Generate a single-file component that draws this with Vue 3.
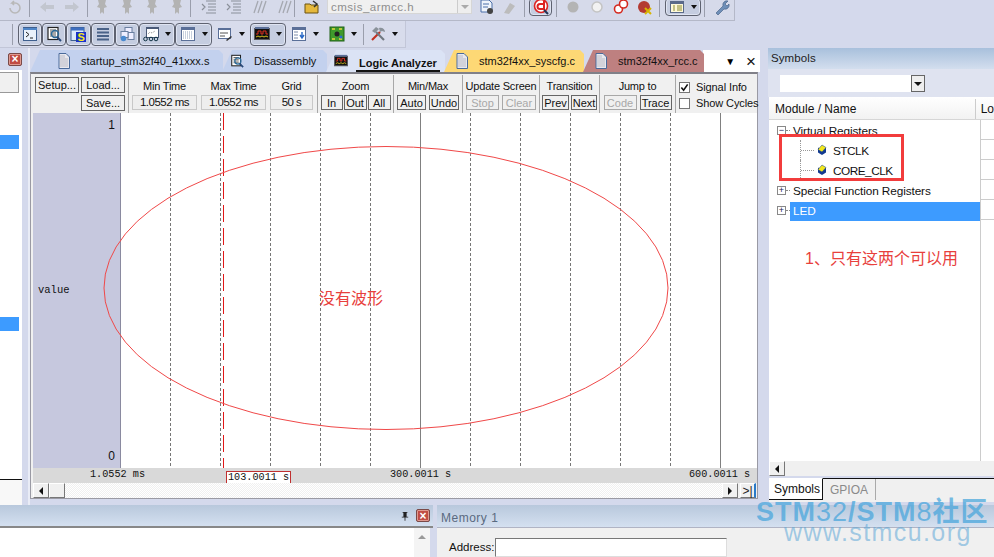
<template>
  <div class="ide">
    <!-- top toolbars -->
    <div class="toolbar row1">
      <svg class="ico" viewBox="0 0 16 16"><path d="M3 9a5 5 0 1 0 5-5H5l2-2M5 4l2 2" fill="none" stroke="#b8b8b8" stroke-width="1.6"/></svg>
      <span class="sep s6"></span>
      <div class="grp m9">
        <svg class="ico" viewBox="0 0 16 16"><path d="M1 8l6-5v3h8v4H7v3z" fill="#c2c6cf"/></svg>
        <svg class="ico" viewBox="0 0 16 16"><path d="M15 8l-6-5v3H1v4h8v3z" fill="#c2c6cf"/></svg>
      </div>
      <span class="sep s7"></span>
      <div class="grp m6">
        <svg v-for="n in 4" :key="n" class="ico" viewBox="0 0 16 16"><path d="M4 1h8l-1 4 2 3-3 1v6l-2-2-2 2V9L3 8l2-3z" fill="#b3b3b3"/></svg>
      </div>
      <span class="sep s5"></span>
      <div class="grp m10">
        <svg v-for="n in 2" :key="'i' + n" class="ico" viewBox="0 0 16 16"><path d="M5 2h10M7 5h8M7 8h8M7 11h8M5 14h10M1 5l3 3-3 3" fill="none" stroke="#8a8f99" stroke-width="1.2"/></svg>
        <svg v-for="n in 2" :key="'c' + n" class="ico" viewBox="0 0 16 16"><path d="M3 14L7 2M7 14l4-12M11 14l4-12" fill="none" stroke="#a5a8b0" stroke-width="1.3"/></svg>
      </div>
      <span class="sep s2"></span>
      <div class="grp m9">
        <svg class="ico" viewBox="0 0 16 16"><path d="M1 5h5l1 1h7v8H1z" fill="#e5b83c" stroke="#6a5210"/><path d="M9 2l4 3-3 3" fill="none" stroke="#333" stroke-width="1.5"/></svg>
      </div>
      <div class="file-combo"><span class="file-name">cmsis_armcc.h</span><span class="file-arrow"></span></div>
      <div class="grp tools-a">
        <svg class="ico" viewBox="0 0 16 16"><path d="M2 1h8l3 3v9H2z" fill="#eef3fb" stroke="#4a6fa8"/><path d="M4 5h6M4 8h5" stroke="#4a6fa8"/><circle cx="11" cy="12" r="3" fill="#444"/></svg>
        <svg class="ico" viewBox="0 0 16 16"><path d="M3 14L9 4l5 3-6 8z" fill="#bcbcbc"/></svg>
      </div>
      <span class="sep s7"></span>
      <span class="pressed dbg">
        <svg class="ico" viewBox="0 0 16 16"><circle cx="8" cy="7" r="6.500" fill="#fff" stroke="#d22" stroke-width="1.600"/><path d="M11 2v8H7a2.500 2.500 0 1 1 0-5h4" fill="none" stroke="#d22" stroke-width="2"/><path d="M11 11l4 4" stroke="#235" stroke-width="2"/></svg>
      </span>
      <span class="sep s4"></span>
      <div class="grp circles">
        <svg class="ico" viewBox="0 0 16 16"><circle cx="8" cy="8" r="5.500" fill="#b4b4b4"/></svg>
        <svg class="ico" viewBox="0 0 16 16"><circle cx="8" cy="8" r="5" fill="#f2f2f2" stroke="#c4c4c4" stroke-width="1.500"/></svg>
        <svg class="ico" viewBox="0 0 16 16"><circle cx="5.500" cy="10" r="4" fill="#fff" stroke="#d42a20" stroke-width="1.600"/><circle cx="10.500" cy="5" r="4" fill="#fff" stroke="#d42a20" stroke-width="1.600"/></svg>
        <svg class="ico" viewBox="0 0 16 16"><circle cx="7" cy="8" r="6" fill="#b43a32"/><path d="M8 9l6 6M14 9l-6 6" stroke="#d8b400" stroke-width="2"/></svg>
      </div>
      <span class="sep s6"></span>
      <span class="pressed drop view-drop">
        <svg class="ico" viewBox="0 0 16 16"><rect x="1.500" y="2.500" width="13" height="11" fill="#fdf8d8" stroke="#5a6a8a"/><path d="M1 4h14" stroke="#5a6a8a" stroke-width="2"/><path d="M4 7h2M4 9h2M4 11h2M8 7h5M8 9h5M8 11h5" stroke="#8a8a30"/></svg>
        <i class="caret"></i>
      </span>
      <span class="sep s3"></span>
      <div class="grp m9">
        <svg class="ico" viewBox="0 0 16 16"><path d="M2 14l7-7a4 4 0 0 1 5-5l-3 3 2 2 2-2a4 4 0 0 1-5 5l-6 6z" fill="#6f8fb8" stroke="#3f5a80" stroke-width=".6"/></svg>
      </div>
    </div>

    <div class="toolbar row2">
      <span class="sep lead"></span>
      <span class="pressed">
        <svg class="ico" viewBox="0 0 16 16"><rect x="1.500" y="1.500" width="13" height="13" fill="#eaf2fc" stroke="#3e5f8e"/><path d="M1 3h14" stroke="#4f86c8" stroke-width="2"/><path d="M4 6l3 2.500L4 11M8 12h3" fill="none" stroke="#222"/></svg>
      </span>
      <span class="pressed">
        <svg class="ico" viewBox="0 0 16 16"><rect x="2" y="1.500" width="10" height="12" fill="#fff" stroke="#222" stroke-width="1.200"/><path d="M4 4h6M4 6h6M4 8h6M4 10h6" stroke="#555"/><circle cx="9" cy="8" r="3.500" fill="none" stroke="#2a6a9a" stroke-width="1.400"/><path d="M11 11l4 4" stroke="#2a4a7a" stroke-width="2"/></svg>
      </span>
      <span class="pressed">
        <svg class="ico" viewBox="0 0 16 16"><rect x="1" y="1.500" width="13" height="13" fill="#dceafa" stroke="#3e5f8e"/><rect x="1" y="1.500" width="13" height="3" fill="#3e6fc0"/><rect x="6" y="6" width="10" height="10" fill="#1a32c8"/><text x="7.500" y="15" class="s-glyph">S</text></svg>
      </span>
      <span class="pressed">
        <svg class="ico" viewBox="0 0 16 16"><path d="M2 3h12M2 6.500h12M2 10h12M2 13.500h12" stroke="#4a6288" stroke-width="2.200"/></svg>
      </span>
      <span class="pressed">
        <svg class="ico" viewBox="0 0 16 16"><rect x="6" y="1.500" width="7" height="6" fill="#eef" stroke="#6a7fa0"/><rect x="9" y="6.500" width="6" height="7" fill="#eef" stroke="#6a7fa0"/><rect x="2" y="5.500" width="7" height="6" fill="#eef" stroke="#6a7fa0"/><circle cx="4.500" cy="12.500" r="2.800" fill="#4a8ad0"/></svg>
      </span>
      <span class="pressed drop">
        <svg class="ico" viewBox="0 0 16 16"><rect x="3.500" y="1.500" width="12" height="10" fill="#fff" stroke="#4a5a78"/><path d="M3 1h13v2H3z" fill="#4a5a78"/><path d="M5 8l2-2 2 1 3-2" fill="none" stroke="#888" stroke-dasharray="1 1"/><circle cx="2.500" cy="13" r="1.800" fill="none" stroke="#134"/><circle cx="8" cy="13" r="1.800" fill="none" stroke="#134"/><circle cx="13" cy="13" r="1.800" fill="none" stroke="#134"/></svg>
        <i class="caret"></i>
      </span>
      <span class="pressed drop">
        <svg class="ico" viewBox="0 0 16 16"><rect x="1.500" y="1.500" width="13" height="13" fill="#fff" stroke="#5a6f98"/><path d="M1 3h14" stroke="#5a6f98" stroke-width="2"/><path d="M3 6h10M3 8h10M3 10h10M3 12h10" stroke="#8fa0bc" stroke-dasharray="1 1"/></svg>
        <i class="caret"></i>
      </span>
      <span class="plain drop">
        <svg class="ico" viewBox="0 0 16 16"><rect x="1.500" y="2.500" width="12" height="10" fill="#fff" stroke="#5a6f98"/><path d="M1 3h13" stroke="#5a6f98" stroke-width="2"/><path d="M3 7h8M3 10h5" stroke="#555"/><path d="M9 14l5-4 1 1-5 4z" fill="#333"/></svg>
        <i class="caret"></i>
      </span>
      <span class="pressed drop">
        <svg class="ico" viewBox="0 0 16 16"><rect x=".5" y="2.500" width="15" height="11" fill="#111" stroke="#5a5a60"/><rect x="1" y="1" width="14" height="2" fill="#5a6f98"/><path d="M2 8h2V5h3v3h2V5h3v3h2" fill="none" stroke="#e03020"/><path d="M2 11l2-1 2 1 2-1 2 1 2-1 2 1" fill="none" stroke="#d8c020"/></svg>
        <i class="caret"></i>
      </span>
      <span class="plain drop">
        <svg class="ico" viewBox="0 0 16 16"><rect x="1.500" y="1.500" width="13" height="13" fill="#fff" stroke="#5a6f98"/><path d="M1 3h14" stroke="#5a6f98" stroke-width="2"/><path d="M3 6h4M3 9h4M3 12h4" stroke="#7a8aa8"/><path d="M11 6v5M9 9l2 3 2-3" fill="none" stroke="#2a6ac8" stroke-width="1.400"/></svg>
        <i class="caret"></i>
      </span>
      <span class="plain drop">
        <svg class="ico" viewBox="0 0 16 16"><rect x="1" y="1" width="14" height="14" fill="#3f9a2c" stroke="#206015"/><circle cx="8" cy="8" r="2.500" fill="#222"/><path d="M3 3h3M10 3h3M3 13h3M10 13h3" stroke="#e8d840" stroke-width="1.400"/><circle cx="12" cy="11" r="1.500" fill="#2a6ad0"/></svg>
        <i class="caret"></i>
      </span>
      <span class="sep tall"></span>
      <span class="plain drop">
        <svg class="ico" viewBox="0 0 16 16"><path d="M2 14l8-8" stroke="#c03020" stroke-width="2.200"/><path d="M14 14L6 6" stroke="#707880" stroke-width="2.200"/><path d="M2 5l4-4 3 2-4 4zM9 2c3-1 6 1 6 4l-3-1-2 1z" fill="#8a929a"/></svg>
        <i class="caret"></i>
      </span>
    </div>

    <!-- main area -->
    <div class="workspace">
      <aside class="left">
        <div class="left-title"><span class="close-btn">×</span></div>
        <div class="left-body">
          <div class="left-box"></div>
          <div class="left-sel first-sel"></div>
          <div class="left-sel second-sel"></div>
        </div>
      </aside>

      <section class="center">
        <div class="tabs">
          <div v-for="t in tabs" :key="t.name" class="tab" :class="t.cls" :style="{ width: t.width + 'px' }">
            <svg v-if="t.icon === 'doc'" class="tab-doc" viewBox="0 0 14 16"><path d="M2 .5h7l3.500 3.500v11.500H2z" fill="#e8e8ee" stroke="#4a6a9a"/><path d="M3 2h5v3h3v9H3z" fill="#d2d2da"/></svg>
            <svg v-else-if="t.icon === 'dis'" class="tab-doc" viewBox="0 0 16 16"><rect x="2" y="1.500" width="10" height="12" fill="#fff" stroke="#222" stroke-width="1.200"/><path d="M4 4h6M4 6h6M4 8h6M4 10h6" stroke="#555"/><circle cx="9" cy="8" r="3.500" fill="none" stroke="#2a6a9a" stroke-width="1.400"/><path d="M11 11l4 4" stroke="#2a4a7a" stroke-width="2"/></svg>
            <svg v-else class="tab-doc" viewBox="0 0 16 16"><rect x=".5" y="2.500" width="15" height="11" fill="#111" stroke="#5a5a60"/><rect x="1" y="1" width="14" height="2" fill="#5a6f98"/><path d="M2 8h2V5h3v3h2V5h3v3h2" fill="none" stroke="#e03020"/><path d="M2 11l2-1 2 1 2-1 2 1 2-1 2 1" fill="none" stroke="#d8c020"/></svg>
            <span class="tab-label">{{ t.name }}</span>
          </div>
          <div class="tab-tail"><span class="tab-menu">▼</span><span class="tab-x">×</span></div>
        </div>

        <div class="analyzer">
          <div class="la-head">
            <div class="group setup-group">
              <div class="btn-col">
                <button class="btn setup">Setup...</button>
              </div>
              <div class="btn-col">
                <button class="btn load">Load...</button>
                <button class="btn load">Save...</button>
              </div>
            </div>
            <div class="group times">
              <div v-for="f in timeFields" :key="f.label" class="field" :style="{ width: f.width + 'px' }">
                <span class="g-title">{{ f.label }}</span>
                <span class="value-box">{{ f.value }}</span>
              </div>
            </div>
            <div v-for="g in groups" :key="g.title" class="group btn-group" :style="{ width: g.width + 'px' }">
              <span class="g-title">{{ g.title }}</span>
              <div class="g-btns" :style="{ gap: g.gap + 'px' }">
                <button v-for="b in g.buttons" :key="b.label" class="btn" :class="{ off: g.off || b.off }" :style="{ width: b.width + 'px' }">{{ b.label }}</button>
              </div>
            </div>
            <div class="group checks">
              <label class="check"><span class="box on">
                <svg viewBox="0 0 10 10"><path d="M1.500 5l2.500 3 4.500-6.500" fill="none" stroke="#111" stroke-width="1.800"/></svg>
              </span>Signal Info</label>
              <label class="check"><span class="box"></span>Show Cycles</label>
            </div>
          </div>

          <div class="plot">
            <div class="names">
              <span class="y-top">1</span>
              <span class="sig-name">value</span>
              <span class="y-bottom">0</span>
            </div>
            <div class="wave">
              <i v-for="g in gridLines" :key="g.x" class="grid-line" :class="{ solid: g.solid }" :style="{ left: g.x + 'px' }"></i>
              <i class="cursor"></i>
            </div>
            <svg class="mark-ellipse" viewBox="0 0 570 300"><ellipse cx="285" cy="149" rx="282" ry="141.500" fill="none" stroke="#f04848"/></svg>
            <span class="mark-text">没有波形</span>
          </div>

          <div class="axis">
            <span v-for="a in axisLabels" :key="a.text" class="axis-label" :style="{ left: a.x + 'px' }">{{ a.text }}</span>
            <span class="axis-cursor">103.0011 s</span>
          </div>

          <div class="hscroll">
            <span class="sb-btn"><i class="arr left-arr"></i></span>
            <span class="sb-thumb"></span>
            <span class="sb-track"></span>
            <span class="sb-btn"><i class="arr right-arr"></i></span>
            <span class="sb-end">&gt;|</span>
          </div>
        </div>
      </section>

      <aside class="right">
        <div class="panel-title">Symbols</div>
        <div class="sym-combo"><span class="sym-input"></span><span class="sym-arrow"></span></div>
        <div class="tree-head">
          <span class="col-name">Module / Name</span>
          <span class="col-lo">Lo</span>
        </div>
        <div class="tree-wrap">
          <div class="tree">
            <div v-for="r in treeRows" :key="r.name" class="tree-row" :class="{ child: r.child }">
              <span v-if="r.toggle" class="toggle">{{ r.toggle }}</span>
              <span v-else class="branch"></span>
              <svg v-if="r.child" class="reg-ico" viewBox="0 0 10 12"><path d="M5 6l4-2.500v5L5 11z" fill="#123a90"/><path d="M5 6L1 3.500v5L5 11z" fill="#123a90"/><path d="M5 1l4 2.500L5 8 1 5.500z" fill="#f2e81c" stroke="#123a90" stroke-width=".5"/></svg>
              <span class="node-name" :class="{ selected: r.selected }">{{ r.name }}</span>
            </div>
            <div class="red-box"></div>
            <div class="note">1、只有这两个可以用</div>
          </div>
          <div class="lo-col"><i v-for="n in 5" :key="n"></i></div>
        </div>
        <div class="right-scroll">
          <span class="sb-btn"><i class="arr left-arr"></i></span>
          <span class="sb-track plain-track"></span>
        </div>
        <div class="right-tabs">
          <span class="rtab active">Symbols</span>
          <span class="rtab">GPIOA</span>
        </div>
      </aside>
    </div>

    <!-- bottom -->
    <div class="bottom">
      <div class="bottom-left">
        <div class="bottom-title">
          <svg class="pin" viewBox="0 0 10 12"><path d="M2 1h6v1H7v5h2v1H1V7h2V2H2zM4.500 8h1v4h-1z" fill="#222"/></svg>
          <span class="close-btn">×</span>
        </div>
        <div class="bottom-body"><span class="up-strip"><i class="arr up-arr"></i></span></div>
      </div>
      <div class="memory">
        <div class="memory-title">Memory 1</div>
        <div class="memory-body">
          <span class="addr-label">Address:</span>
          <span class="addr-input"></span>
        </div>
      </div>
    </div>

    <!-- site watermark over the screenshot -->
    <div class="watermark">
      <div class="wm-top"><b>STM</b>32<b>/STM</b>8<b>社区</b></div>
      <div class="wm-url">www.stmcu.org</div>
    </div>
  </div>
</template>

<script setup>
const tabs = [
  { name: "startup_stm32f40_41xxx.s", width: 193, cls: "blue first-tab", icon: "doc" },
  { name: "Disassembly", width: 105, cls: "blue", icon: "dis" },
  { name: "Logic Analyzer", width: 119, cls: "active", icon: "la" },
  { name: "stm32f4xx_syscfg.c", width: 140, cls: "yellow", icon: "doc" },
  { name: "stm32f4xx_rcc.c", width: 121, cls: "rose", icon: "doc" },
];

const timeFields = [
  { label: "Min Time", value: "1.0552 ms", width: 65 },
  { label: "Max Time", value: "1.0552 ms", width: 65 },
  { label: "Grid", value: "50 s", width: 43 },
];

const groups = [
  { title: "Zoom", width: 76, gap: 1, buttons: [{ label: "In", width: 22 }, { label: "Out", width: 23 }, { label: "All", width: 23 }] },
  { title: "Min/Max", width: 69, gap: 3, buttons: [{ label: "Auto", width: 29 }, { label: "Undo", width: 30 }] },
  { title: "Update Screen", width: 77, gap: 3, off: true, buttons: [{ label: "Stop", width: 33 }, { label: "Clear", width: 34 }] },
  { title: "Transition", width: 60, gap: 2, buttons: [{ label: "Prev", width: 27 }, { label: "Next", width: 26 }] },
  { title: "Jump to", width: 76, gap: 3, buttons: [{ label: "Code", width: 33, off: true }, { label: "Trace", width: 32 }] },
];

// grid lines sit every 50 s, the 300 s and 600 s marks are solid
const gridLines = Array.from({ length: 12 }, (_, i) => ({
  x: 49 + i * 50,
  solid: i === 5 || i === 11,
}));

const axisLabels = [
  { text: "1.0552 ms", x: 57 },
  { text: "300.0011 s", x: 357 },
  { text: "600.0011 s", x: 656 },
];

const treeRows = [
  { name: "Virtual Registers", toggle: "−" },
  { name: "STCLK", child: true },
  { name: "CORE_CLK", child: true },
  { name: "Special Function Registers", toggle: "+" },
  { name: "LED", toggle: "+", selected: true },
];
</script>

<style>
html,
body {
  margin: 0;
  background: #d4d9ec;
}
</style>

<style scoped>
.ide {
  position: relative;
  width: 994px;
  height: 557px;
  overflow: hidden;
  display: flex;
  flex-direction: column;
  background: #d4d9ec;
  font-family: "Liberation Sans", "Noto Sans CJK SC", sans-serif;
  font-size: 12px;
  color: #111;
}

.toolbar {
  display: flex;
  align-items: center;
  box-sizing: border-box;
  flex: none;
}

.row1 {
  width: 735px;
  height: 21px;
  padding: 0 0 7px 7px;
  border-bottom: 1px solid #b4b8c8;
  border-right: 1px solid #b4b8c8;
  background: #d6daea;
}

.row2 {
  width: 406px;
  height: 27px;
  padding-left: 12px;
  border-bottom: 1px solid #c2c6d8;
  border-right: 1px solid #c2c6d8;
  background: #d8dcec;
}

.ico {
  width: 16px;
  height: 16px;
  flex: none;
}

.grp {
  display: flex;
  gap: 9px;
  flex: none;
}

.m6 {
  margin-left: 6px;
}

.m9 {
  margin-left: 9px;
}

.m10 {
  margin-left: 10px;
}

.tools-a {
  margin-left: 7px;
  gap: 6px;
}

.circles {
  margin-left: 8px;
  gap: 8px;
}

.sep {
  width: 1px;
  height: 20px;
  background: #9a9eac;
  flex: none;
}

.s2 {
  margin-left: 2px;
}

.s3 {
  margin-left: 3px;
}

.s4 {
  margin-left: 4px;
}

.s5 {
  margin-left: 5px;
}

.s6 {
  margin-left: 6px;
}

.s7 {
  margin-left: 7px;
}

.sep.lead {
  height: 21px;
  margin-right: 5px;
}

.sep.tall {
  height: 21px;
  margin: 0 1px;
}

.file-combo {
  display: flex;
  align-items: center;
  width: 145px;
  height: 15px;
  margin-left: 7px;
  background: #f0f0f0;
  border: 1px solid #d6d6d6;
  box-sizing: border-box;
  flex: none;
}

.file-name {
  flex: 1;
  padding-left: 3px;
  color: #8e8e8e;
  font-size: 11.500px;
  letter-spacing: .5px;
}

.file-arrow {
  width: 13px;
  height: 13px;
  border-left: 1px solid #ccc;
  background: #eee;
  position: relative;
}

.file-arrow::after {
  content: "";
  position: absolute;
  left: 3px;
  top: 5px;
  border: 4px solid transparent;
  border-top: 4px solid #aaa;
}

.pressed,
.plain {
  display: flex;
  align-items: center;
  justify-content: center;
  box-sizing: border-box;
  height: 23px;
  flex: none;
  width: 24.200px;
}

.pressed {
  background: #c5cde0;
  border: 1px solid #5e6270;
  border-radius: 4px;
  box-shadow: inset 0 0 0 1px #dfe4f2;
}

.drop {
  width: 36.500px;
  gap: 6px;
}

.plain.drop {
  width: 38px;
}

.dbg {
  width: 23px;
  height: 18px;
  margin-left: 4px;
}

.view-drop {
  width: 36px;
  height: 18px;
  margin-left: 5px;
}

.caret {
  width: 0;
  height: 0;
  border: 3px solid transparent;
  border-top: 4px solid #111;
  border-bottom: 0;
}

.workspace {
  display: flex;
  height: 457px;
  flex: none;
}

.left {
  width: 22px;
  display: flex;
  flex-direction: column;
  background: #f8f8f8;
  flex: none;
}

.left-title {
  height: 22px;
  display: flex;
  justify-content: flex-end;
  align-items: center;
  background: #d4d9ec;
}

.close-btn {
  display: flex;
  align-items: center;
  justify-content: center;
  width: 14px;
  height: 13px;
  box-sizing: border-box;
  border: 1px solid #7a4a48;
  border-radius: 2px;
  background: #c04c44;
  color: #fff;
  font-size: 12px;
  font-weight: bold;
  line-height: 1;
  box-shadow: inset 0 0 0 1px #e09a90;
}

.left-body {
  position: relative;
  height: 410px;
  background: #fff;
  border-bottom: 1px solid #111;
  box-sizing: border-box;
  padding-top: 2px;
}

.left-box {
  height: 21px;
  width: 19px;
  background: #f0f0f0;
  border: 1px solid #999;
  border-left: 0;
  box-sizing: border-box;
}

.left-sel {
  position: absolute;
  left: 0;
  width: 19px;
  height: 14px;
  background: #3d9bff;
}

.first-sel {
  top: 65px;
}

.second-sel {
  top: 247px;
}

.center {
  width: 732px;
  margin-left: 6px;
  padding: 2px 0 6px;
  box-sizing: border-box;
  border-left: 2px solid #e9ecf6;
  display: flex;
  flex-direction: column;
  flex: none;
}

.tabs {
  display: flex;
  height: 22px;
  flex: none;
}

.tab {
  display: flex;
  align-items: center;
  box-sizing: border-box;
  padding-left: 8px;
  height: 22px;
  clip-path: polygon(10px 0, calc(100% - 4px) 0, 100% 4px, 100% 100%, 0 100%);
  margin-right: -1px;
  font-size: 11px;
  flex: none;
}

.tab.first-tab {
  padding-left: 27px;
}

.tab-doc {
  width: 14px;
  height: 16px;
  margin-right: 10px;
  flex: none;
}

.tab.blue {
  background: #c3d1ee;
}

.tab.yellow {
  padding-left: 11px;
  background: #fdd875;
}

.tab.rose {
  padding-left: 11px;
  background: #be8080;
}

.tab.active {
  background: #dbe3f5;
  font-weight: bold;
  white-space: nowrap;
}

.tab.active .tab-label {
  align-self: flex-end;
  border-bottom: 2px solid #111;
  padding: 0 3px 1px;
  margin-left: -2px;
  font-size: 11px;
}

.tab-tail {
  flex: 1;
  display: flex;
  align-items: center;
  justify-content: flex-end;
  gap: 11px;
  padding-right: 4px;
  background: #fff;
}

.tab-menu {
  font-size: 10px;
  color: #000;
}

.tab-x {
  font-size: 17px;
  line-height: 1;
}

.analyzer {
  width: 728px;
  height: 427px;
  padding: 1px 0 0 2px;
  box-sizing: border-box;
  background: #f0f0f0;
  border: 1px solid #9a9aa4;
  border-top: 2px solid #808088;
  display: flex;
  flex-direction: column;
  flex: none;
}

.la-head {
  display: flex;
  height: 38px;
  flex: none;
  font-size: 11px;
}

.group {
  box-sizing: border-box;
  border-right: 1px solid #a8a8a8;
  flex: none;
}

.setup-group {
  display: flex;
  gap: 2px;
  width: 96px;
  padding: 2px 0 0 2px;
}

.btn-col {
  display: flex;
  flex-direction: column;
  gap: 2px;
}

.btn {
  box-sizing: border-box;
  padding: 0;
  background: #f0f0f0;
  border: 1px solid #666;
  font: inherit;
  color: #111;
  height: 15px;
  line-height: 12px;
}

.btn.setup {
  width: 44px;
  height: 16px;
}

.btn.load {
  width: 44px;
  height: 16px;
}

.btn.off {
  border-color: #a8a8a8;
  color: #a8a8a8;
}

.times {
  display: flex;
  gap: 4px;
  width: 189px;
  padding-left: 3px;
}

.field {
  display: flex;
  flex-direction: column;
  align-items: center;
}

.g-title {
  display: block;
  margin-top: 3px;
  height: 17px;
  line-height: 17px;
  text-align: center;
  letter-spacing: -.2px;
  white-space: nowrap;
}

.value-box {
  display: block;
  width: 100%;
  height: 15px;
  line-height: 13px;
  box-sizing: border-box;
  border: 1px solid #c8c8c8;
  background: #eee;
  text-align: center;
  font-size: 11.500px;
  letter-spacing: -.5px;
  white-space: nowrap;
}

.btn-group {
  padding: 0 2px;
}

.g-btns {
  display: flex;
  justify-content: center;
}

.checks {
  border-right: 0;
  padding: 4px 0 0 3px;
}

.check {
  display: flex;
  align-items: center;
  gap: 6px;
  height: 16px;
  white-space: nowrap;
  letter-spacing: -.1px;
}

.box {
  display: block;
  width: 11px;
  height: 11px;
  box-sizing: border-box;
  border: 1px solid #777;
  background: #fff;
}

.box svg {
  display: block;
  width: 9px;
  height: 9px;
}

.plot {
  position: relative;
  display: flex;
  height: 355px;
  background: #fff;
  flex: none;
}

.names {
  position: relative;
  width: 88px;
  background: #c6c8de;
  border-right: 1px solid #8a8aa0;
  box-sizing: border-box;
  flex: none;
}

.y-top {
  position: absolute;
  right: 5px;
  top: 5px;
}

.y-bottom {
  position: absolute;
  right: 5px;
  bottom: 5px;
}

.sig-name {
  position: absolute;
  left: 5px;
  top: 171px;
  font-family: "Liberation Mono", monospace;
  font-size: 10.500px;
}

.wave {
  position: relative;
  flex: 1;
}

.grid-line {
  position: absolute;
  top: 0;
  bottom: 0;
  width: 1px;
  background: repeating-linear-gradient(#777 0 3px, transparent 3px 5px);
}

.grid-line.solid {
  background: #808080;
}

.cursor {
  position: absolute;
  left: 102px;
  top: 0;
  bottom: 0;
  width: 1px;
  background: repeating-linear-gradient(#e01818 0 17px, transparent 17px 23px);
}

.mark-ellipse {
  position: absolute;
  left: 68px;
  top: 26px;
  width: 570px;
  height: 300px;
  pointer-events: none;
}

.mark-text {
  position: absolute;
  left: 286px;
  top: 172px;
  color: #e8403c;
  font-size: 16px;
}

.axis {
  position: relative;
  height: 15px;
  background: #d9d9d9;
  font-family: "Liberation Mono", monospace;
  font-size: 10.200px;
  flex: none;
}

.axis-label {
  position: absolute;
  top: 1px;
  white-space: nowrap;
}

.axis-cursor {
  position: absolute;
  left: 193px;
  top: 3px;
  width: 65px;
  height: 12px;
  line-height: 12px;
  box-sizing: border-box;
  border: 1px solid #c03030;
  border-bottom: 0;
  background: #fff;
  padding-left: 1px;
  white-space: nowrap;
  overflow: hidden;
}

.hscroll {
  display: flex;
  align-items: stretch;
  height: 15px;
  flex: none;
}

.sb-btn,
.sb-thumb,
.sb-end {
  box-sizing: border-box;
  width: 16px;
  height: 15px;
  background: #f0f0f0;
  border: 1px solid;
  border-color: #fff #777 #777 #fff;
  display: flex;
  align-items: center;
  justify-content: center;
  flex: none;
}

.sb-track {
  flex: 1;
  background: repeating-conic-gradient(#f0f0f0 0 25%, #fff 0 50%) 0 0 / 2px 2px;
}

.plain-track {
  background: #f0f0f0;
}

.sb-end {
  font-size: 12px;
  color: #222;
  border-right: 2px solid #2a7ac8;
  margin-left: 2px;
  margin-right: 1px;
}

.arr {
  width: 0;
  height: 0;
  border: 4px solid transparent;
}

.left-arr {
  border-left: 0;
  border-right: 4px solid #111;
}

.right-arr {
  border-right: 0;
  border-left: 4px solid #111;
}

.up-arr {
  border-top: 0;
  border-bottom: 4px solid #999;
}

.right {
  width: 226px;
  margin-left: 8px;
  display: flex;
  flex-direction: column;
  flex: none;
}

.panel-title {
  height: 21px;
  line-height: 20px;
  padding-left: 3px;
  background: linear-gradient(#a8c0dc, #d3deee);
  font-size: 11.500px;
  letter-spacing: .1px;
  color: #222;
  flex: none;
}

.sym-combo {
  display: flex;
  align-items: center;
  height: 28px;
  padding-left: 12px;
  background: #dfe3f0;
  flex: none;
}

.sym-input {
  width: 131px;
  height: 17px;
  background: #fff;
}

.sym-arrow {
  position: relative;
  width: 14px;
  height: 17px;
  box-sizing: border-box;
  border: 1px solid #666;
  background: #eee;
}

.sym-arrow::after {
  content: "";
  position: absolute;
  left: 2px;
  top: 6px;
  border: 4px solid transparent;
  border-top: 4px solid #111;
}

.tree-head {
  display: flex;
  align-items: flex-end;
  height: 23px;
  margin-left: 1px;
  background: linear-gradient(#fff, #f2f2f2);
  border-bottom: 1px solid #d6d6d6;
  box-sizing: border-box;
  flex: none;
}

.col-name {
  width: 211px;
  padding-left: 6px;
  box-sizing: border-box;
  border-right: 1px solid #ccc;
  line-height: 20px;
  font-size: 12px;
}

.col-lo {
  padding-left: 5px;
  line-height: 20px;
}

.tree-wrap {
  display: flex;
  height: 341px;
  margin-left: 1px;
  background: #fff;
  flex: none;
}

.tree {
  position: relative;
  width: 211px;
  box-sizing: border-box;
  flex: none;
}

.tree-row {
  display: flex;
  align-items: center;
  height: 20px;
  padding-left: 8px;
}

.toggle {
  position: relative;
  width: 9px;
  height: 9px;
  box-sizing: border-box;
  border: 1px solid #888;
  background: #fff;
  color: #225;
  font-size: 9px;
  line-height: 7px;
  text-align: center;
  flex: none;
  margin-right: 4px;
}

.toggle::after {
  content: "";
  position: absolute;
  left: 8px;
  top: 3px;
  width: 4px;
  border-top: 1px dotted #888;
}

.tree-row .node-name {
  padding: 0 3px;
  height: 20px;
  line-height: 22px;
  font-size: 11.800px;
  letter-spacing: -.1px;
}

.child .node-name {
  letter-spacing: -.5px;
}

.tree-row .node-name.selected {
  flex: 1;
  height: 19px;
  margin-top: 3px;
  line-height: 19px;
  background: #3d9bff;
  color: #fff;
}

.child {
  padding-left: 31px;
}

.branch {
  width: 15px;
  height: 20px;
  border-left: 1px dotted #999;
  background: repeating-linear-gradient(90deg, #999 0 1px, transparent 1px 2px) 0 10px / 15px 1px no-repeat;
  margin-right: 2px;
  box-sizing: border-box;
  flex: none;
}

.reg-ico {
  width: 10px;
  height: 12px;
  margin-right: 3px;
  flex: none;
}

.red-box {
  position: absolute;
  left: 10px;
  top: 14px;
  width: 125px;
  height: 47px;
  box-sizing: border-box;
  border: 3px solid #f23c3c;
}

.note {
  position: absolute;
  left: 36px;
  top: 125px;
  color: #e8403c;
  font-size: 16px;
  white-space: nowrap;
}

.lo-col {
  flex: 1;
  border-left: 1px solid #ccc;
}

.lo-col i {
  display: block;
  height: 20px;
  box-sizing: border-box;
  border-bottom: 1px solid #ccc;
}

.right-scroll {
  display: flex;
  height: 15px;
  margin-left: 1px;
  background: #f0f0f0;
  flex: none;
}

.right-tabs {
  display: flex;
  align-items: flex-start;
  height: 24px;
  margin-left: 1px;
  background: #f0f0f0;
  border-top: 1px solid #111;
  margin-top: 2px;
  box-sizing: border-box;
  flex: none;
}

.rtab {
  box-sizing: border-box;
  height: 21px;
  line-height: 23px;
  padding: 0 7px;
  color: #8a8a8a;
  border-right: 1px solid #aaa;
}

.rtab.active {
  width: 54px;
  color: #111;
  background: #fff;
  margin-top: -1px;
  height: 22px;
  border-top: 1px solid #fff;
  border-right: 1px solid #111;
  border-bottom: 1px solid #111;
  padding: 0 5px;
  line-height: 21px;
}

.bottom {
  display: flex;
  flex: 1;
  min-height: 0;
}

.bottom-left {
  width: 433px;
  display: flex;
  flex-direction: column;
  flex: none;
}

.bottom-title {
  display: flex;
  align-items: center;
  justify-content: flex-end;
  gap: 7px;
  height: 23px;
  padding-right: 3px;
  background: linear-gradient(#b8c8dc, #d4e0f0);
  border-bottom: 2px solid #888;
  box-sizing: border-box;
  flex: none;
}

.pin {
  width: 8px;
  height: 10px;
}

.bottom-body {
  flex: 1;
  display: flex;
  justify-content: flex-end;
  background: #fff;
  margin-right: 3px;
}

.up-strip {
  width: 16px;
  padding-top: 7px;
  display: flex;
  justify-content: center;
  align-items: flex-start;
  background: #f4f4f4;
}

.memory {
  flex: 1;
  margin-left: 4px;
  display: flex;
  flex-direction: column;
}

.memory-title {
  height: 23px;
  line-height: 26px;
  padding-left: 4px;
  color: #5a6a80;
  background: linear-gradient(#b8c8dc, #d4e0f0);
  border-bottom: 1px solid #b0b4c4;
  box-sizing: border-box;
  letter-spacing: .5px;
  flex: none;
}

.memory-body {
  flex: 1;
  display: flex;
  align-items: flex-start;
  padding: 10px 0 0 12px;
  background: #f0f0f0;
}

.addr-label {
  line-height: 18px;
  width: 46px;
  font-size: 11.500px;
}

.addr-input {
  width: 232px;
  height: 19px;
  box-sizing: border-box;
  background: #fff;
  border: 1px solid #ddd;
  border-top: 1px solid #777;
  border-left: 1px solid #777;
}

.watermark {
  position: absolute;
  left: 756px;
  top: 501px;
  width: 238px;
  color: rgba(70, 165, 220, .72);
  pointer-events: none;
}

.wm-top {
  font-size: 27px;
  line-height: 22px;
  letter-spacing: 1px;
  white-space: nowrap;
}

.wm-url {
  margin-left: 28px;
  font-size: 25px;
  line-height: 18px;
  letter-spacing: 1.400px;
  color: rgba(90, 165, 215, .55);
  white-space: nowrap;
}

.s-glyph {
  font-size: 11px;
  font-weight: bold;
  fill: #f6e820;
}
</style>
